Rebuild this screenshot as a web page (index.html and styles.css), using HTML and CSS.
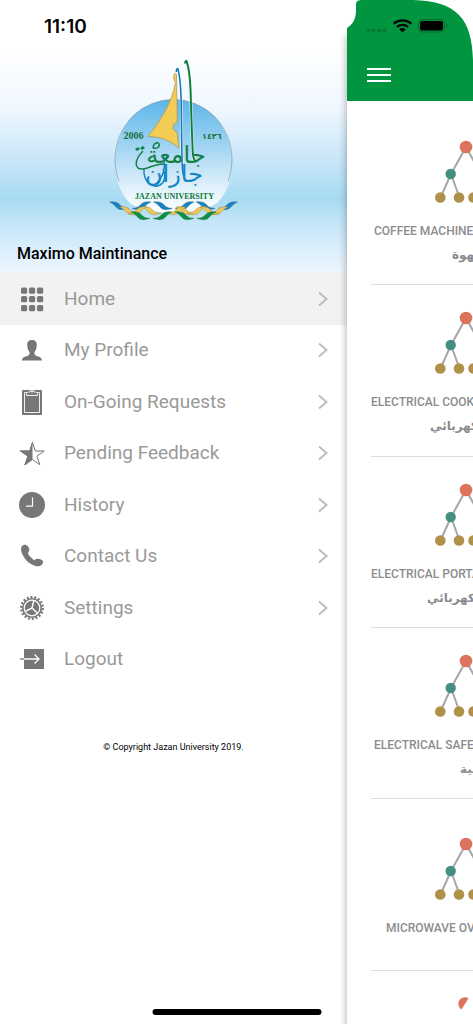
FILE: index.html
```html
<!DOCTYPE html>
<html lang="en">
<head>
<meta charset="utf-8">
<meta name="viewport" content="width=device-width, initial-scale=1">
<title>Maximo Maintinance</title>
<link rel="stylesheet" href="styles.css">
</head>
<body>
<svg width="0" height="0" class="defs" aria-hidden="true">
  <defs>
    <symbol id="tree" viewBox="0 0 62 64">
      <g stroke="#a6a6a6" stroke-width="2" fill="none">
        <path d="M31 7 16 34 5.500 57.500M16 34l8.500 23.500M31 7l15 27 10.500 23.500M46 34l-8.500 23.500"/>
      </g>
      <circle cx="31" cy="7" r="6.300" fill="#dc735c"/>
      <circle cx="15.700" cy="34" r="5.200" fill="#458f82"/><circle cx="46.300" cy="34" r="5.200" fill="#458f82"/>
      <g fill="#b09149"><circle cx="5.300" cy="57.500" r="5.300"/><circle cx="24" cy="57.500" r="5.300"/><circle cx="38.500" cy="57.500" r="5.300"/><circle cx="56.700" cy="57.500" r="5.300"/></g>
    </symbol>
    <symbol id="chevron" viewBox="0 0 12 16"><path d="M2 1.500 9.500 8 2 14.500" fill="none" stroke="#bdbdbd" stroke-width="2"/></symbol>
    <linearGradient id="sky" x1="0" y1="0" x2="0" y2="1"><stop offset="0" stop-color="#5cb6ea"/><stop offset=".4" stop-color="#9fd3f2"/><stop offset=".75" stop-color="#dceffa"/><stop offset="1" stop-color="#fff"/></linearGradient>
    <path id="wave" d="M0 0C5-.8 8 0 10.500 2.800 12.500 5 15 6.500 19 6.200 14 8.300 9.500 8.200 7 5.500 4.800 3 3 1.300 0 0Z"/>
  </defs>
</svg>
<div class="app">
  <aside class="drawer">
    <header class="profile">
      <time class="clock">11:10</time>
      <svg class="logo" viewBox="110 58 130 162" role="img" aria-label="Jazan University">
        <path d="M131 202C110 182 111 139 134 115a58 58 0 0 1 81 0c23 24 24 67 3 87-18 13-68 13-87 0Z" fill="url(#sky)"/>
        <path d="M120 180C111 156 118 131 134 115a58 58 0 0 1 81 0c16 16 23 41 14 65" fill="none" stroke="#8399a8" stroke-width=".7"/>
        <path d="M175 73.500c1-1.500 2.500-1 2.500.5l.8 47.500c-5 .5-6 8-.3 9.500l2 16c-8-7-18-11.500-31-11.500C162 119 173 101 176.500 81.500c-1.500-2-2.500-5-1.500-8Z" fill="#f3cc55" stroke="#a99150" stroke-width=".7"/>
        <path d="M177.500 71c-.5-2 .5-3.500 1.200-3.500 2 6 3.500 20 3.600 44l.8 52c.3 8 1 12 3 14" fill="none" stroke="#fff" stroke-width="2.600"/>
        <path d="M177.500 71c-.5-2 .5-3.500 1.200-3.500 2 6 3.500 20 3.600 44l.8 52c.3 8 1 12 3 14" fill="none" stroke="#1979bb" stroke-width="1.600"/>
        <path d="M186.200 62.500c-.3-1.500.5-2.500 1.200-2.500 2.600 6 4.300 22 4.600 45l1.500 41c.3 10 1 13 4 15" fill="none" stroke="#eef8fd" stroke-width="2.800"/>
        <path d="M186.200 62.500c-.3-1.500.5-2.500 1.200-2.500 2.600 6 4.300 22 4.600 45l1.500 41c.3 10 1 13 4 15" fill="none" stroke="#107d36" stroke-width="1.900"/>
        <text x="124.500" y="138" class="logo-year">2006</text>
        <text x="203" y="138" class="logo-year small">١٤٢٦</text>
        <text x="177" y="162" class="logo-script green">جامعة</text>
        <text x="175" y="181" class="logo-script blue">جازان</text>
        <path d="M144 150c-9 9-9 19 0 18 8-1 12-6 22-5M154 147c0-4 4-7 6-4 1 3-2 5-6 4" fill="none" stroke="#138044" stroke-width="1.500"/>
        <path d="M136 148l3-2 2 2-3 2ZM141 147l3-2 2 2-3 2Z" fill="#138044"/>
        <path d="M145 168c-1 12 8 20 16 16 5-3 6-9 3-16M163 154c5 10 2 24-9 31" fill="none" stroke="#1684c4" stroke-width="1.500"/>
        <text x="175.500" y="198" class="logo-name">JAZAN UNIVERSITY</text>
        <g fill="#1684c4" stroke="#3d6470" stroke-width=".4">
          <use href="#wave" x="110.500" y="201"/><use href="#wave" x="154.500" y="201"/><use href="#wave" x="197" y="201"/>
          <g transform="matrix(-1 0 0 1 350 0)"><use href="#wave" x="111.500" y="201"/><use href="#wave" x="155" y="201"/><use href="#wave" x="198" y="201"/></g>
        </g>
        <g fill="#eac75b" stroke="#8d7d48" stroke-width=".4">
          <use href="#wave" x="120.500" y="206"/><use href="#wave" x="143" y="206"/><use href="#wave" x="177" y="206"/>
          <g transform="matrix(-1 0 0 1 350 0)"><use href="#wave" x="121" y="206"/><use href="#wave" x="143" y="206"/><use href="#wave" x="163" y="206"/><use href="#wave" x="202" y="206"/></g>
          <use href="#wave" x="201" y="206"/>
        </g>
        <g fill="#0b9142" stroke="#326b45" stroke-width=".4">
          <use href="#wave" x="132" y="211"/><use href="#wave" x="176" y="211"/>
          <g transform="matrix(-1 0 0 1 350 0)"><use href="#wave" x="133" y="211"/><use href="#wave" x="177" y="211"/></g>
        </g>
      </svg>
      <h1 class="username">Maximo Maintinance</h1>
    </header>
    <nav class="menu" aria-label="Main menu">
      <a class="item active" href="#home"><svg class="icon" viewBox="0 0 28 28"><g fill="#777"><rect x="3" y="2.500" width="6.200" height="6.200" rx="1.500"/><rect x="11" y="2.500" width="6.200" height="6.200" rx="1.500"/><rect x="19" y="2.500" width="6.200" height="6.200" rx="1.500"/><rect x="3" y="11" width="6.200" height="6.200" rx="1.500"/><rect x="11" y="11" width="6.200" height="6.200" rx="1.500"/><rect x="19" y="11" width="6.200" height="6.200" rx="1.500"/><rect x="3" y="20" width="6.200" height="6.200" rx="1.500"/><rect x="11" y="20" width="6.200" height="6.200" rx="1.500"/><rect x="19" y="20" width="6.200" height="6.200" rx="1.500"/></g></svg><span>Home</span><svg class="chevron"><use href="#chevron"/></svg></a>
      <a class="item" href="#profile"><svg class="icon" viewBox="0 0 28 28"><path fill="#777" d="M14 4c3.500 0 5 2.200 4.800 5.500-.1 3-1 5-2.300 6.500-.3 2 .2 3 1.500 3.700 2.500 1 6 1.300 6 4.800H4c0-3.500 3.500-3.800 6-4.800 1.300-.7 1.800-1.700 1.500-3.700-1.300-1.500-2.200-3.500-2.300-6.500C9 6.200 10.500 4 14 4Z"/></svg><span>My Profile</span><svg class="chevron"><use href="#chevron"/></svg></a>
      <a class="item" href="#requests"><svg class="icon" viewBox="0 0 28 28"><rect x="4" y="2" width="20" height="25" rx="1" fill="#777"/><path d="M9 4.500H6.500v20h15v-20H19M8.500 7.500h11V5.700L17.500 4H16a2 2 0 0 0-4 0h-1.500l-2 1.700Z" fill="none" stroke="#fff" stroke-width=".9"/><circle cx="14" cy="3.700" r=".9" fill="#fff"/></svg><span>On-Going Requests</span><svg class="chevron"><use href="#chevron"/></svg></a>
      <a class="item" href="#feedback"><svg class="icon" viewBox="0 0 28 28"><path d="M14.500 3.500 17.300 12h8.900l-7.200 5.200 2.800 8.500-7.300-5.200-7.300 5.200L10 17.200 2.500 12h9.200Z" fill="none" stroke="#777" stroke-width="1"/><path d="M14.500 2v18.500L6 26.500l3.400-9.300L1 11.500h10.500Z" fill="#777"/></svg><span>Pending Feedback</span><svg class="chevron"><use href="#chevron"/></svg></a>
      <a class="item" href="#history"><svg class="icon" viewBox="0 0 28 28"><circle cx="14" cy="14" r="13" fill="#777"/><path d="M14.500 6.500v8.700H8" fill="none" stroke="#fff" stroke-width="1.200"/></svg><span>History</span><svg class="chevron"><use href="#chevron"/></svg></a>
      <a class="item" href="#contact"><svg class="icon" viewBox="0 0 28 28"><path fill="#777" d="M3.700 4.500C5 2.500 7.500 2.300 9 3.500c2.200 1.800 3.200 4.400 1.500 6.500-1 1.300-.2 2.500 1.300 4.200 1.700 1.900 3.500 3.500 4.700 4 1.300-1.800 4-2 6.500-.7 2 1 2.600 2.500 1.700 4-1.200 2.500-4.700 3.600-8 2.300C10.500 21.500 5.500 16.500 3.500 10c-.6-2-.7-4 .2-5.500Z"/></svg><span>Contact Us</span><svg class="chevron"><use href="#chevron"/></svg></a>
      <a class="item" href="#settings"><svg class="icon" viewBox="0 0 28 28"><circle cx="14" cy="14" r="10.800" fill="none" stroke="#777" stroke-width="2.400" stroke-dasharray="2 1.770"/><circle cx="14" cy="14" r="10" fill="#777"/><circle cx="14" cy="14" r="7.800" fill="none" stroke="#fff" stroke-width="1.200"/><path d="m14 14 1.800-7.500M14 14l-6.800 3.300M14 14l5.800 5.500" stroke="#fff" stroke-width="1.400"/></svg><span>Settings</span><svg class="chevron"><use href="#chevron"/></svg></a>
      <a class="item" href="#logout"><svg class="icon" viewBox="0 0 28 28"><path fill="#777" d="M6 4h20v20H6Z"/><path d="M6 14h15M16.500 9.500 21 14l-4.500 4.500" fill="none" stroke="#fff" stroke-width="1.300"/><path d="M2 14h4" stroke="#777" stroke-width="1.300"/></svg><span>Logout</span></a>
    </nav>
    <footer class="copyright">© Copyright Jazan University 2019.</footer>
  </aside>
  <main class="page">
    <header class="topbar">
      <svg class="corner left" viewBox="0 0 14 30" aria-hidden="true"><path d="M0 0h14C10 .5 9 2 9 5v7C8.500 20 5 25 0 28Z" fill="#fff"/></svg>
      <svg class="corner right" viewBox="0 0 60 60" aria-hidden="true"><path d="M0 0h60v60C59 20 45 1 0 0Z" fill="#fff"/></svg>
      <div class="status">
        <svg width="84" height="16" viewBox="0 0 84 16" role="img" aria-label="Wi-Fi connected, battery full">
          <g fill="#087732"><circle cx="2" cy="12.500" r="2"/><circle cx="7.500" cy="12.500" r="2"/><circle cx="13" cy="12.500" r="2"/><circle cx="18.500" cy="12.500" r="2"/></g>
          <g fill="none" stroke="#000" stroke-width="2.300"><path d="M27.700 5.700c5-4.500 12.600-4.500 17.600 0M31 9c3.100-2.900 7.900-2.900 11 0"/></g><path d="M33.300 11.300c1.800-1.700 4.600-1.700 6.400 0L36.500 14.500Z"/>
          <rect x="52.500" y="1.500" width="26" height="12.500" rx="3.500" fill="none" stroke="#056a2c"/><rect x="54" y="3" width="23" height="9.500" rx="2"/><path d="M80 5.500c2 .7 2 4 0 4.700Z" fill="#056a2c"/>
        </svg>
      </div>
      <button class="burger" type="button" aria-label="Toggle menu"><i></i><i></i><i></i></button>
    </header>
    <section class="cards">
      <article class="card"><svg class="tree"><use href="#tree"/></svg><h2 class="start-1">COFFEE MACHINE</h2><p class="arabic offset-3" lang="ar">القهوة</p></article>
      <article class="card"><svg class="tree"><use href="#tree"/></svg><h2>ELECTRICAL COOKER</h2><p class="arabic offset-2" lang="ar">كهربائي</p></article>
      <article class="card"><svg class="tree"><use href="#tree"/></svg><h2>ELECTRICAL PORTABLE</h2><p class="arabic offset-1" lang="ar">كهربائي</p></article>
      <article class="card"><svg class="tree"><use href="#tree"/></svg><h2 class="start-1">ELECTRICAL SAFE -</h2><p class="arabic offset-4" lang="ar">كهربائية</p></article>
      <article class="card"><svg class="tree"><use href="#tree"/></svg><h2 class="start-2">MICROWAVE OVEN</h2></article>
      <article class="card"><svg class="tree" viewBox="0 0 62 64"><path d="M26.500 12.500A6.300 6.300 0 0 1 33.500 1.200Z" fill="#dc735c"/></svg><h2></h2><p class="arabic"></p></article>
    </section>
  </main>
  <div class="home-indicator"></div>
</div>
</body>
</html>
```
FILE: styles.css
```css
* { box-sizing: border-box; }
body { margin: 0; background: #fff; font-family: Roboto, "Liberation Sans", sans-serif; }
.defs { position: absolute; }
.app {
  position: relative;
  display: grid;
  grid-template-columns: minmax(0, 347fr) minmax(0, 126fr);
  height: 100vh;
  overflow: hidden;
}
.profile {
  display: flex;
  flex-direction: column;
  background: linear-gradient(#fff 17%, #eff7fe 40%, #c5e5f8 60%, #a7dbf2 73%, #c6e6f9 82%, #eef6fe 100%);
}
.clock {
  padding: 16px 0 0 44px;
  font: 600 19px/22px Inter, "Liberation Sans", sans-serif;
}
.logo { width: 130px; height: 162px; margin-top: 21px; align-self: center; }
.logo-year { font: bold 10px "Liberation Serif", "DejaVu Sans", serif; fill: #176f3d; }
.small { font-size: 8px; }
.logo-name { font: bold 8px "Liberation Serif", serif; fill: #0f7a3d; text-anchor: middle; }
.logo-script { font: 24px "DejaVu Sans", sans-serif; text-anchor: middle; }
.green { fill: #138044; }
.blue { fill: #1684c4; }
.username {
  margin: 0;
  padding: 21px 17px 7px;
  font-size: 16px;
  line-height: 24px;
  font-weight: 500;
}
.menu { display: grid; grid-auto-rows: 1fr; min-height: 412px; }
.item {
  display: flex;
  align-items: center;
  padding: 0 18px;
  color: #999;
  font-size: 19px;
  line-height: 24px;
  text-decoration: none;
}
.item span { flex: 1; }
.active { background: #f2f2f2; }
.icon { width: 28px; height: 28px; margin-right: 18px; }
.chevron { width: 12px; height: 16px; }
.copyright { padding-top: 56px; font-size: 9px; line-height: 12px; text-align: center; }
.page { position: relative; background: #fff; }
.page::before {
  content: "";
  position: absolute;
  z-index: -1;
  inset: 36px 0 0;
  box-shadow: 0 0 8px rgba(0, 0, 0, .35);
}
.drawer { position: relative; z-index: -2; }
.app { isolation: isolate; }
.topbar {
  position: relative;
  padding: 18px 19px;
  height: 101px;
  background: #02953f;
}
.corner { position: absolute; top: 0; }
.left { left: 0; width: 14px; height: 30px; }
.right { right: 0; width: 60px; height: 60px; }
.status { position: relative; display: flex; }
.burger {
  display: grid;
  gap: 4px;
  width: 24px;
  margin: 34px 0 0 1px;
  padding: 0;
  border: 0;
  background: none;
}
.burger i { height: 2px; background: #fff; }
.cards {
  display: grid;
  grid-auto-rows: 1fr;
  min-height: 1028px;
  padding-left: 24px;
  margin-top: 13px;
}
.card {
  display: flex;
  flex-direction: column;
  justify-content: center;
  padding-top: 9px;
  border-bottom: 1px solid #ddd;
  overflow: hidden;
  white-space: nowrap;
}
.tree { flex: none; width: 62px; height: 64px; margin-left: 64px; }
.card h2 {
  height: 24px;
  margin: 15px 0 0;
  color: #8b8c8e;
  font-size: 12px;
  line-height: 24px;
  font-weight: 500;
}
.card .start-1 { padding-left: 3px; }
.card .start-2 { padding-left: 15px; }
.arabic {
  height: 24px;
  margin: 0;
  color: #8b8c8e;
  font: bold 12px/24px "DejaVu Sans", sans-serif;
}
.offset-1 { padding-left: 56px; }
.offset-2 { padding-left: 59px; }
.offset-3 { padding-left: 81px; }
.offset-4 { padding-left: 89px; }
.home-indicator {
  position: absolute;
  bottom: 9px;
  left: 50%;
  width: 169px;
  height: 6px;
  border-radius: 3px;
  background: #000;
  transform: translateX(-50%);
}
```
